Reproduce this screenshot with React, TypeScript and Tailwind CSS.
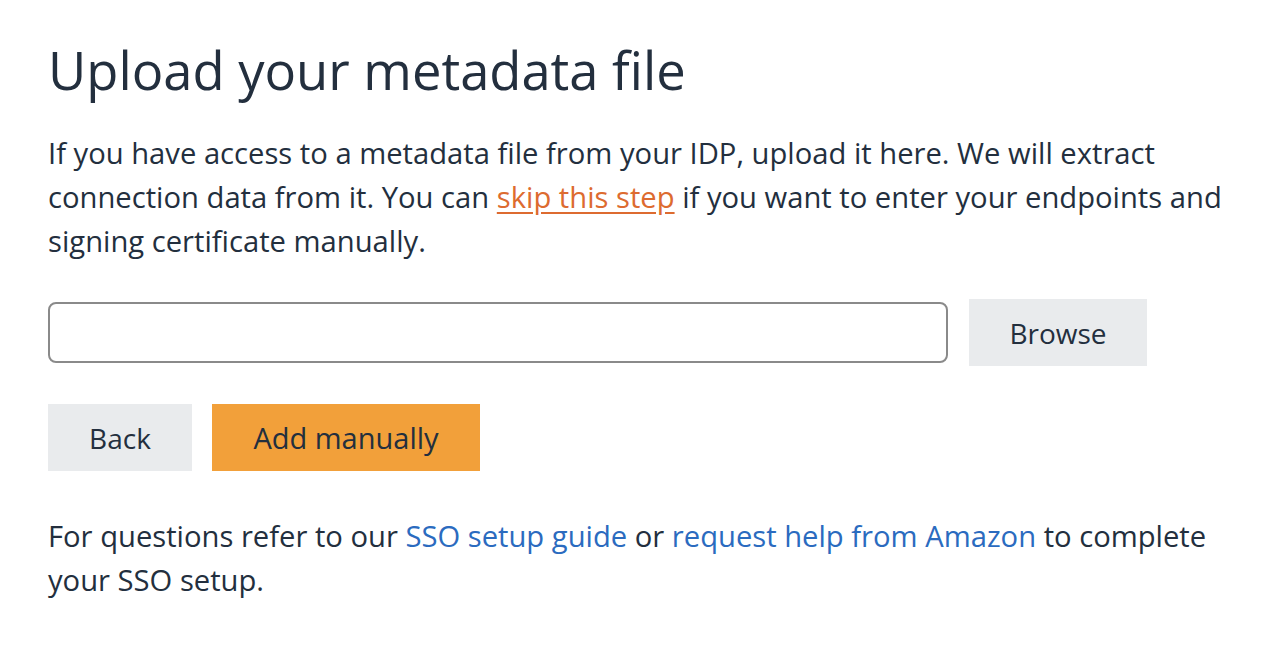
export default function App() {
  return (
    <div className="min-h-[652px] bg-white px-12 pt-[38px] text-[#232f3e]" style={{ fontFamily: '"Open Sans", "Noto Sans", sans-serif' }}>
      <h1 className="text-[52.5px] leading-[64px] font-normal">Upload your metadata file</h1>
      <p className="mt-[29px] text-[29.2px] leading-[44px]">
        If you have access to a metadata file from your IDP, upload it here. We will extract
        <br />
        connection data from it. You can{" "}
        <a className="text-[#dd6b30] underline underline-offset-4">skip this step</a> if you want to enter your endpoints and
        <br />
        signing certificate manually.
      </p>
      <div className="mt-[36px] flex items-center gap-[21px]">
        <div className="h-[61px] w-[900px] rounded-[8px] border-2 border-[#8a8a8a]" />
        <button className="h-[67px] w-[178px] bg-[#e9ebed] text-[28px]">Browse</button>
      </div>
      <div className="mt-[38px] flex gap-[20px]">
        <button className="h-[67px] w-[144px] bg-[#e9ebed] text-[28px]">Back</button>
        <button className="h-[67px] w-[268px] bg-[#f2a03a] text-[29px]">Add manually</button>
      </div>
      <p className="mt-[43px] text-[29.2px] leading-[44px]">
        For questions refer to our <a className="text-[#2b6bbf]">SSO setup guide</a> or{" "}
        <a className="text-[#2b6bbf]">request help from Amazon</a> to complete
        <br />
        your SSO setup.
      </p>
    </div>
  )
}
